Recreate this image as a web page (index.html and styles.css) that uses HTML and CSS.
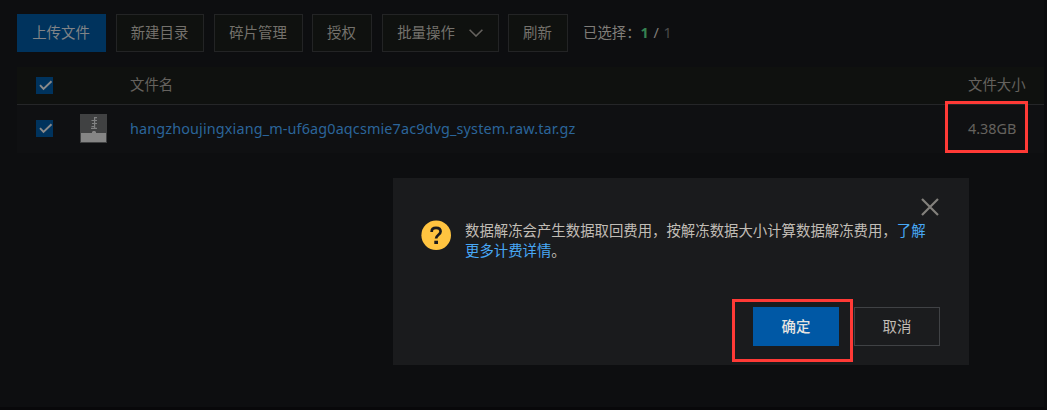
FILE: index.html
```html
<!DOCTYPE html>
<html lang="zh-CN">
<head>
<meta charset="utf-8">
<title>文件管理</title>
<link rel="stylesheet" href="styles.css">
</head>
<body>
<main class="page">
  <div class="toolbar">
    <button class="btn btn-upload">上传文件</button>
    <button class="btn btn-mkdir">新建目录</button>
    <button class="btn btn-parts">碎片管理</button>
    <button class="btn btn-auth">授权</button>
    <button class="btn btn-batch">批量操作<svg class="chevron" width="14" height="8" viewBox="0 0 14 8"><path d="M.6.8 7 7 13.4.8"/></svg></button>
    <button class="btn btn-refresh">刷新</button>
    <div class="selected">已选择：<b>1</b><span class="slash">/</span><span class="total">1</span></div>
  </div>
  <div class="table">
    <div class="row head">
      <span class="check"><svg width="17" height="17" viewBox="0 0 17 17"><path d="m4 8.2 3.5 3.8 8-7.8"/></svg></span>
      <span class="thumb"></span>
      <span class="name">文件名</span>
      <span class="size">文件大小</span>
    </div>
    <div class="row item">
      <span class="check"><svg width="17" height="17" viewBox="0 0 17 17"><path d="m4 8.2 3.5 3.8 8-7.8"/></svg></span>
      <span class="thumb"><svg width="27" height="29" viewBox="0 0 27 29">
        <path fill="#404142" d="M0 0h27v29H0z"/>
        <path fill="#858585" d="M1 19h11v-1l1-1h2l1 1v1h10v9H1z"/>
        <path fill="none" stroke="#808182" stroke-width="1.2" d="M17 3.6h-2.4v10.8M11.5 6.5H17M12 9.5h5M11.5 12.5h3M11 14.4h6"/>
      </svg></span>
      <a class="name link">hangzhoujingxiang_m-uf6ag0aqcsmie7ac9dvg_system.raw.tar.gz</a>
      <span class="size">4.38GB</span>
    </div>
  </div>
  <section class="dialog">
    <svg class="question" width="30" height="30" viewBox="0 0 30 30">
      <circle cx="15.2" cy="15.2" r="14.8" fill="#ffc440"/>
      <path d="M10.7 12V11.4C10.7 8.9 12.3 7.8 15 7.8s4.6 1.2 4.6 3.8c0 3.2-4.5 3.1-4.5 7" fill="none" stroke="#1a1b1d" stroke-width="2.7"/>
      <path d="M13.3 20.7h3.7V24h-3.7z" fill="#1a1b1d"/>
    </svg>
    <p class="message">数据解冻会产生数据取回费用，按解冻数据大小计算数据解冻费用，<a>了解<br>更多计费详情</a>。</p>
    <svg class="close" width="18" height="18" viewBox="0 0 18 18"><path d="m1 1 16 16M17 1 1 17"/></svg>
    <div class="actions">
      <button class="action confirm">确定</button>
      <button class="action cancel">取消</button>
    </div>
  </section>
  <div class="mark mark-size"></div>
  <div class="mark mark-confirm"></div>
</main>
</body>
</html>
```
FILE: styles.css
```css
* { box-sizing: border-box; }
body {
  margin: 0;
  background: #0d0e10;
  font: 14.4px/20px "Noto Sans", "Noto Sans CJK SC", sans-serif;
  color: #74716c;
}
button { font: inherit; margin: 0; padding: 0; }
.page {
  position: relative;
  width: 1047px;
  height: 410px;
  padding: 14px 0 0 17px;
  overflow: hidden;
  border-bottom: 3px solid #08080a;
  border-right: 3px solid #0a0b0d;
}
.toolbar { display: flex; height: 38px; }
.btn {
  display: flex;
  align-items: center;
  justify-content: center;
  height: 38px;
  margin-right: 10px;
  padding-right: 1px;
  border: 1px solid #232425;
  background: #0f110f;
  color: #74716c;
}
.btn-upload { width: 89px; border-color: #00335d; background: #00335d; color: #818487; }
.btn-mkdir { width: 88px; }
.btn-parts { width: 89px; margin-right: 9px; }
.btn-auth { width: 60px; }
.btn-batch { width: 117px; margin-right: 9px; }
.btn-refresh { width: 60px; margin-right: 15px; }
.chevron { margin-left: 14px; fill: none; stroke: #65625e; stroke-width: 1.6; }
.selected { display: flex; align-items: center; white-space: nowrap; color: #807d79; }
.selected b { width: 13px; color: #368250; }
.slash { width: 10px; }
.total { color: #4b4b4b; }
.table { margin-top: 15px; }
.row { display: flex; align-items: center; padding-left: 19px; }
.head { height: 38px; padding-bottom: 1px; border-bottom: 1px solid #252628; background: #0f110f; color: #65625e; }
.item { height: 48px; padding-bottom: 1px; background: #0f1012; }
.check { width: 17px; height: 17px; margin-right: 27px; background: #00335d; }
.check svg { display: block; fill: none; stroke: #8b8b8b; stroke-width: 1.9; }
.thumb { width: 27px; height: 29px; margin-right: 23px; }
.thumb svg { display: block; }
.name { width: 838px; white-space: nowrap; }
.link { color: #2b659a; letter-spacing: .14px; }
.size { color: #65625e; }
.dialog {
  position: absolute;
  left: 393px;
  top: 178px;
  width: 576px;
  height: 187px;
  padding: 42px 29px 19px 28px;
  display: grid;
  grid-template-columns: 44px 1fr;
  grid-template-rows: 87px 39px;
  background: #1a1b1d;
}
.message { margin: 1px 0 0; color: #c1bdb6; white-space: nowrap; }
.message a { color: #48a8f5; }
.close { position: absolute; right: 30px; top: 20px; fill: none; stroke: #83807c; stroke-width: 2.2; }
.actions { grid-column: 1 / -1; display: flex; justify-content: flex-end; gap: 15px; }
.action { width: 86px; height: 39px; border: 1px solid #404245; background: #1b1c1e; color: #c1bdb6; }
.confirm { border-color: #0058a5; background: #0058a5; color: #e7e5e1; font-weight: 500; }
.mark { position: absolute; border: 3px solid #ff3a36; }
.mark-size { left: 945px; top: 101px; width: 83px; height: 52px; }
.mark-confirm { left: 732px; top: 299px; width: 121px; height: 63px; }
.question { display: block; }
```
